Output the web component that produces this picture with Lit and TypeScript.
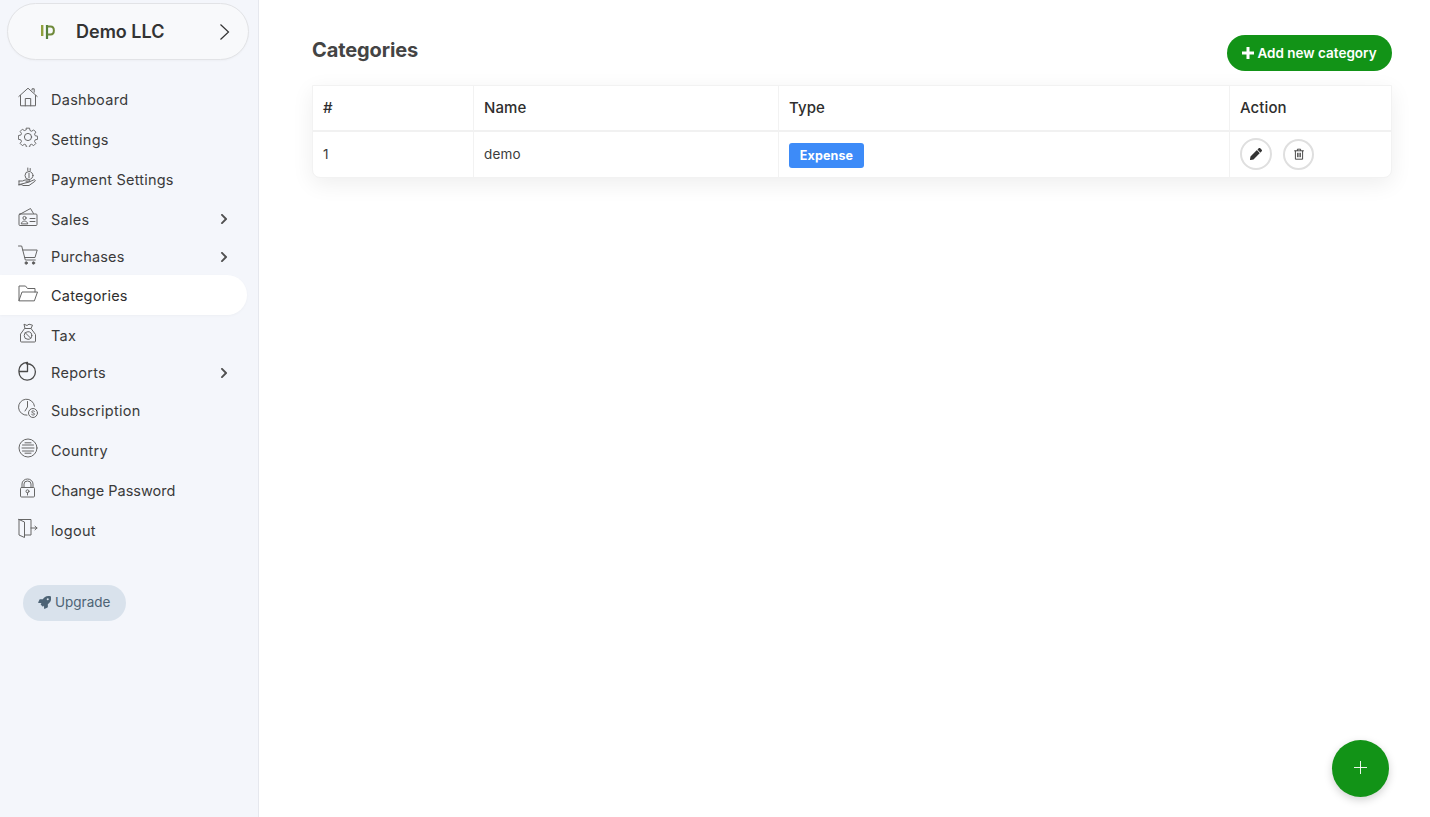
import { LitElement, html, css, svg } from "lit";
import { customElement } from "lit/decorators.js";

const ic = (body: unknown) => html`<svg class="ico" viewBox="0 0 20 20" fill="none" stroke="#666" stroke-width="1" stroke-linecap="round" stroke-linejoin="round">${body}</svg>`;

const icons: Record<string, unknown> = {
  home: svg`<path d="M.8 9.500 10 1.200l9.200 8.300"/><path d="M2.500 8.500V18.800h15V8.500"/><path d="M7.300 18.800v-7.300h5.400v7.300"/><path d="M14 3V1.800h2.200v3.400"/>`,
  gear: svg`<circle cx="10" cy="10" r="3.600"/><path d="M8.400.8h3.200l.5 2.500 1.700.7 2.100-1.400 2.300 2.300-1.400 2.100.7 1.700 2.500.5v3.200l-2.500.5-.7 1.700 1.400 2.100-2.300 2.300-2.100-1.400-1.700.7-.5 2.500H8.400l-.5-2.500-1.700-.7-2.100 1.400-2.300-2.300 1.400-2.100-.7-1.700-2.500-.5V8.500l2.500-.5.7-1.700-1.400-2.100 2.300-2.300 2.100 1.400 1.700-.7z" transform="translate(.4 .4) scale(.96)"/>`,
  pay: svg`<circle cx="11" cy="8.500" r="4"/><path d="M11 6.300v4.400M9.800 1v2.500M12.200 1.500v2"/><path d="M1 14h3.500l2.500-1h4c1 0 1 1.800 0 1.800H8"/><path d="M11 15l5-2.200c1.200-.4 1.800 1 .8 1.600L11 18.500H5l-1-.8H1z"/><path d="M1 14v4"/>`,
  sales: svg`<path d="M1.500 7.500 12.500 1.500l3 5"/><rect x="1" y="7" width="18" height="11.500" rx="1"/><circle cx="6.500" cy="11" r="1.600"/><path d="M3.300 16.500c.3-3.300 6.100-3.300 6.400 0zM12 11.500h5M12 14.500h5"/>`,
  cart: svg`<path d="M.5 1h3.200L7.300 15h10"/><path d="M4.700 5H19.200l-2.200 7.500H6.600"/><circle cx="8.200" cy="18" r="1.200" fill="#555"/><circle cx="15.500" cy="18" r="1.200" fill="#555"/>`,
  folder: svg`<path d="M1 17.500V3h6.500l2 2.500h7.500V9"/><path d="M1 17.500 4 9h15.500l-3 8.500z"/>`,
  tax: svg`<path d="M7 5.500h6l4.500 6v6.500a1 1 0 0 1-1 1h-13a1 1 0 0 1-1-1v-6.500z"/><path d="M7 5.500 6 1.200l3 1.300 2-1.300 3.500 1L13 5.500"/><circle cx="10" cy="12.500" r="3.800"/><path d="m7.500 10 5 5"/>`,
  reports: svg`<path d="M8.500 2.800a8.200 8.200 0 1 1-7.500 7.700h8.500V1.500A8.200 8.200 0 0 0 1 10.500" stroke-width="1.300" stroke="#4a4a4a"/>`,
  sub: svg`<path d="M9 17.200a8 8 0 1 1 7.500-9"/><path d="M9.500 3.500v5.500l-2.500 4"/><circle cx="15" cy="15" r="4.500"/><path d="M16.400 13.300c-1-.9-2.800-.5-2.700.7s3.100.9 2.900 2.200c-.2 1.100-2 1.100-2.900.3"/>`,
  country: svg`<circle cx="10" cy="10" r="9"/><path d="M4.500 7h11M4 10h12M4.500 13h11M7 4.800h6M7 15.200h6" stroke-width="1"/>`,
  lock: svg`<path d="M4 9.500V6a5.500 5 0 0 1 11 0v3.500"/><path d="M6 9.500V6a3.500 3 0 0 1 7 0v3.500"/><rect x="2.500" y="9.500" width="14" height="9.500" rx="1"/><circle cx="9.500" cy="13.300" r="1.500"/><path d="M9.500 14.800v2.200"/>`,
  logout: svg`<path d="M1 1.500h12v15.500H6.500"/><path d="M1 1.500v15.500l5.500 2.500V4L1 1.500z"/><path d="M13 10h6M17 8.200l2 1.800-2 1.800"/>`,
};

const chevron = html`<svg class="chev" viewBox="0 0 320 512"><path fill="#505050" d="M285.500 273 91.100 467.400c-9.400 9.400-24.600 9.400-33.900 0l-22.700-22.700c-9.400-9.400-9.400-24.500 0-33.900L188.500 256 34.500 101.300c-9.300-9.400-9.300-24.500 0-33.900l22.700-22.700c9.400-9.400 24.600-9.400 33.900 0L285.500 239c9.400 9.400 9.400 24.600 0 33.900z"/></svg>`;

const nav = [
  { label: "Dashboard", icon: "home", cls: "" },
  { label: "Settings", icon: "gear", cls: "" },
  { label: "Payment Settings", icon: "pay", cls: "tight" },
  { label: "Sales", icon: "sales", cls: "h39", more: true },
  { label: "Purchases", icon: "cart", cls: "h37 tight", more: true },
  { label: "Categories", icon: "folder", cls: "active tight" },
  { label: "Tax", icon: "tax", cls: "" },
  { label: "Reports", icon: "reports", cls: "h35", more: true },
  { label: "Subscription", icon: "sub", cls: "" },
  { label: "Country", icon: "country", cls: "" },
  { label: "Change Password", icon: "lock", cls: "tighter" },
  { label: "logout", icon: "logout", cls: "" },
];

@customElement("app-root")
export class AppRoot extends LitElement {
  static styles = css`
    :host { display: block; height: 817px; font-family: "Inter", "Liberation Sans", sans-serif; color: #333; background: #fff; overflow: hidden; }
    .page { display: flex; height: 817px; position: relative; }
    .side { box-sizing: border-box; width: 259px; flex: none; background: #f4f6fb; border-right: 1px solid #e6e8ee; padding-top: 3px; }
    .brand { box-sizing: border-box; width: 242px; height: 57px; margin-left: 7px; border-radius: 29px; background: #f8f9fb; border: 1px solid #e2e3e6; display: flex; align-items: center; padding-left: 33px; box-shadow: 0 1px 2px rgba(0,0,0,.03); }
    .logo { width: 15px; height: 15px; flex: none; }
    .brand-name { margin-left: 20px; font-size: 18px; font-weight: 600; color: #333; flex: 1; }
    .brand-chev { width: 11px; height: 18px; margin-right: 18px; }
    .menu { margin-top: 19px; }
    .item { height: 40px; display: flex; align-items: center; padding-left: 18px; font-size: 14.500px; color: #3a3a3a; box-sizing: border-box; width: 247px; }
    .item.h39 { height: 39px; padding-top: 1px; }
    .item.h37 { height: 37px; }
    .item.h35 { height: 35px; }
    .item.active { background: #fff; border-radius: 0 20px 20px 0; box-shadow: 0 1px 3px rgba(0,0,0,.03); color: #2e2e2e; }
    .ico { width: 20px; height: 20px; flex: none; margin-right: 13px; margin-top: -4px; }
    .label { flex: 1; letter-spacing: 0.28px; }
    .tight .label { letter-spacing: 0.2px; }
    .tighter .label { letter-spacing: 0; }
    .chev { width: 8px; height: 12px; margin-right: 19px; }
    .upgrade { display: inline-flex; align-items: center; gap: 4px; margin: 35px 0 0 23px; height: 36px; width: 103px; box-sizing: border-box; padding: 0 0 2px 15px; border-radius: 18px; background: #d9e2ec; color: #4d6375; font-size: 13.500px; font-weight: 400; }
    .upgrade svg { width: 13px; height: 13px; flex: none; }
    .main { flex: 1; box-sizing: border-box; padding: 35px 38px 0 53px; min-width: 0; }
    .head { display: flex; justify-content: space-between; align-items: center; height: 36px; }
    h1 { margin: 0 0 6px; font-size: 20px; font-weight: 700; color: #444; letter-spacing: -0.1px; }
    .add { display: flex; align-items: center; justify-content: center; gap: 3px; width: 165px; height: 36px; border-radius: 18px; background: #129317; color: #fff; font-size: 13.500px; font-weight: 600; padding-bottom: 1px; box-sizing: border-box; }
    .add svg { width: 12px; height: 12px; }
    .table { margin-top: 14px; background: #fff; border: 1px solid #f2f2f2; border-radius: 0 0 8px 8px; box-shadow: 0 6px 22px rgba(0,0,0,.07); display: grid; grid-template-columns: 161px 305px 451px 1fr; }
    .cell { box-sizing: border-box; display: flex; align-items: center; padding-left: 10px; border-right: 1px solid #f2f2f2; font-size: 13.500px; color: #3c3c3c; }
    .cell:nth-child(4n) { border-right: 0; }
    .th { height: 46px; border-bottom: 2px solid #f1f1f1; font-size: 15px; font-weight: 500; color: #2e2e2e; padding-bottom: 1px; letter-spacing: 0.1px; }
    .td { height: 45px; padding-bottom: 2px; letter-spacing: 0.15px; }
    .badge { background: #3d8bf8; color: #fff; font-size: 12.500px; font-weight: 700; height: 25px; width: 75px; display: flex; align-items: center; justify-content: center; border-radius: 3px; margin-top: 3px; }
    .acts { gap: 11px; padding-bottom: 1px; }
    .act { box-sizing: border-box; width: 32px; height: 32px; border-radius: 50%; border: 2px solid #dfdfdf; background: #fff; display: flex; align-items: center; justify-content: center; }
    .act.del { width: 31px; height: 31px; }
    .act svg { width: 12px; height: 12px; }
    .fab { position: absolute; right: 41px; bottom: 20px; width: 57px; height: 57px; border-radius: 50%; background: #129317; display: flex; align-items: center; justify-content: center; box-shadow: 0 3px 8px rgba(0,0,0,.18); padding-bottom: 3px; box-sizing: border-box; }
    .fab svg { width: 13px; height: 13px; }
  `;

  render() {
    return html`<div class="page">
      <aside class="side">
        <div class="brand">
          <svg class="logo" viewBox="0 0 15 15">
            <path d="M1.200 1v11" stroke="#8fa03c" stroke-width="2.400"/>
            <path d="M6 1v14" stroke="#55803a" stroke-width="2.200"/>
            <path d="M6.500 2.500h3c4.500 0 4.500 8 0 8h-3" fill="none" stroke="#6f8a3a" stroke-width="2"/>
          </svg>
          <span class="brand-name">Demo LLC</span>
          <svg class="brand-chev" viewBox="0 0 11 18" fill="none" stroke="#333" stroke-width="1.200"><path d="M1.500 1.500 9.500 9l-8 7.500"/></svg>
        </div>
        <div class="menu">
          ${nav.map(n => html`<div class="item ${n.cls}">
            ${ic(icons[n.icon])}<span class="label">${n.label}</span>${n.more ? chevron : ""}
          </div>`)}
        </div>
        <div class="upgrade">
          <svg viewBox="0 0 512 512"><path fill="#4d6375" d="M505 19c-2-6-6-10-12-12C460 0 434 0 408 0 302 0 238 57 190 128H83c-8 0-18 6-22 13L10 243c-2 3-2 7-2 11 0 13 11 24 24 24h107l-23 23c-12 12-14 34 0 48l51 51c12 12 34 14 48 0l23-23v107c0 13 11 24 24 24 4 0 8-1 11-2l102-51c7-4 13-14 13-22V323c71-48 128-112 128-218 0-26 0-52-11-86zM384 168a40 40 0 1 1 0-80 40 40 0 0 1 0 80z"/></svg>
          Upgrade
        </div>
      </aside>
      <main class="main">
        <div class="head">
          <h1>Categories</h1>
          <div class="add"><svg viewBox="0 0 12 12"><path d="M6 0v12M0 6h12" stroke="#fff" stroke-width="3"/></svg>Add new category</div>
        </div>
        <div class="table">
          <div class="cell th">#</div><div class="cell th">Name</div><div class="cell th">Type</div><div class="cell th">Action</div>
          <div class="cell td">1</div><div class="cell td">demo</div>
          <div class="cell td"><span class="badge">Expense</span></div>
          <div class="cell td acts">
            <span class="act"><svg viewBox="0 0 512 512"><path fill="#333" d="M497.900 142.100 452 188c-4.700 4.700-12.300 4.700-17 0L324 77c-4.700-4.700-4.700-12.300 0-17l45.900-45.900c18.700-18.700 49.100-18.700 67.900 0l60.100 60.100c18.800 18.700 18.800 49.100 0 67.900zM284.200 99.800 21.600 362.400.4 483.900c-2.900 16.400 11.400 30.600 27.800 27.800l121.500-21.300 262.600-262.600c4.700-4.700 4.700-12.300 0-17l-111-111c-4.800-4.700-12.400-4.700-17.100 0z"/></svg></span>
            <span class="act del"><svg viewBox="0 0 14 15" fill="none" stroke="#333" stroke-width="1.100"><path d="M1 3.500h12M5 3.500V1.500h4v2M2.500 3.500v10.500h9V3.500M5.300 6v5.500M7 6v5.500M8.700 6v5.500"/></svg></span>
          </div>
        </div>
      </main>
      <div class="fab"><svg viewBox="0 0 14 14"><path d="M7 0v14M0 7h14" stroke="#fff" stroke-width="1"/></svg></div>
    </div>`;
  }
}
